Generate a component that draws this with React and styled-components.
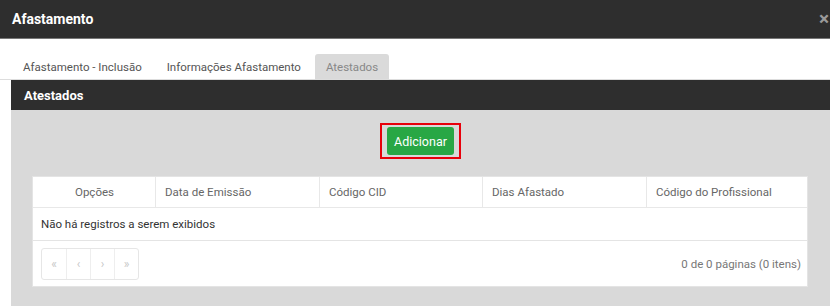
import React from 'react'
import styled, { createGlobalStyle } from 'styled-components'

const Global = createGlobalStyle`
  * { box-sizing: border-box; }
  body {
    margin: 0;
    background: #fff;
    font-family: Roboto, "Liberation Sans", Arial, sans-serif;
    overflow: hidden;
  }
`

const Modal = styled.div`
  width: 830px;
  height: 306px;
  background: #fff;
  display: flex;
  flex-direction: column;
`

const Header = styled.div`
  height: 39px;
  flex: none;
  display: flex;
  align-items: center;
  justify-content: space-between;
  padding: 0 0 1px 12px;
  background: #2e2e2e;
  border-bottom: 1px solid #777;
`

const Title = styled.h4`
  margin: 0;
  font-size: 14px;
  font-weight: 700;
  color: #fff;
`

const Close = styled.span`
  width: 12px;
  margin-right: -1px;
  font-size: 19px;
  font-weight: 700;
  line-height: 1;
  color: #9a9a9a;
`

const Tabs = styled.div`
  display: flex;
  gap: 3px;
  padding: 15px 0 0 12px;
  border-bottom: 1px solid #ddd;
`

const Tab = styled.div`
  height: 25px;
  padding: 0 11px;
  display: flex;
  align-items: center;
  font-size: 11.5px;
  color: ${p => (p.active ? '#888' : '#555')};
  background: ${p => (p.active ? '#dadada' : 'transparent')};
  border-radius: 3px 3px 0 0;
`

const Panel = styled.div`
  flex: 1;
  margin-left: 11px;
  display: flex;
  flex-direction: column;
  background: #d9d9d9;
`

const PanelHead = styled.div`
  height: 30px;
  flex: none;
  display: flex;
  align-items: center;
  padding-left: 13px;
  background: #2e2e2e;
  color: #fff;
  font-size: 13px;
  font-weight: 700;
`

const Body = styled.div`
  padding: 13px 22px 0 21px;
  display: flex;
  flex-direction: column;
`

const Actions = styled.div`
  display: flex;
  justify-content: center;
  margin-bottom: 17px;
`

const Highlight = styled.div`
  margin-left: 1px;
  padding: 2px 5px;
  border: 2px solid #e8000b;
`

const AddButton = styled.button`
  display: block;
  height: 28px;
  width: 67px;
  padding: 0;
  border: none;
  border-radius: 3px;
  background: #28a745;
  color: #fff;
  font-family: inherit;
  font-size: 12.5px;
`

const Grid = styled.div`
  background: #fff;
  border: 1px solid #e4e4e4;
  border-bottom: none;
`

const HeadRow = styled.div`
  display: grid;
  grid-template-columns: 122px 164px 163px 164px 1fr;
  height: 31px;
  border-bottom: 1px solid #e8e8e8;
`

const HeadCell = styled.div`
  display: flex;
  align-items: center;
  justify-content: ${p => (p.center ? 'center' : 'flex-start')};
  padding: 0 9px;
  font-size: 11.5px;
  font-weight: 400;
  color: #666;
  border-left: ${p => (p.first ? 'none' : '1px solid #e8e8e8')};
  padding-left: ${p => (p.first ? '10px' : '9px')};
`

const EmptyRow = styled.div`
  height: 33px;
  display: flex;
  align-items: center;
  padding-left: 8px;
  font-size: 11.5px;
  color: #333;
  border-bottom: 1px solid #e4e4e4;
`

const PagerRow = styled.div`
  height: 46px;
  display: flex;
  align-items: center;
  justify-content: space-between;
  padding: 0 6px 0 8px;
  border-bottom: 1px solid #e4e4e4;
`

const Pager = styled.div`
  display: flex;
  height: 32px;
  border: 1px solid #e6e6e6;
  border-radius: 3px;
`

const PageBtn = styled.span`
  width: 24px;
  display: flex;
  align-items: center;
  justify-content: center;
  font-size: 12px;
  color: #c8c8c8;
  border-left: ${p => (p.first ? 'none' : '1px solid #eee')};
`

const Info = styled.span`
  font-size: 11.5px;
  color: #777;
`

const columns = ['Data de Emissão', 'Código CID', 'Dias Afastado', 'Código do Profissional']

export default function App() {
  return (
    <>
      <Global />
      <Modal>
        <Header>
          <Title>Afastamento</Title>
          <Close>×</Close>
        </Header>
        <Tabs>
          <Tab>Afastamento - Inclusão</Tab>
          <Tab>Informações Afastamento</Tab>
          <Tab active>Atestados</Tab>
        </Tabs>
        <Panel>
          <PanelHead>Atestados</PanelHead>
          <Body>
            <Actions>
              <Highlight>
                <AddButton>Adicionar</AddButton>
              </Highlight>
            </Actions>
            <Grid>
              <HeadRow>
                <HeadCell first center>Opções</HeadCell>
                {columns.map(c => (
                  <HeadCell key={c}>{c}</HeadCell>
                ))}
              </HeadRow>
              <EmptyRow>Não há registros a serem exibidos</EmptyRow>
              <PagerRow>
                <Pager>
                  <PageBtn first>«</PageBtn>
                  <PageBtn>‹</PageBtn>
                  <PageBtn>›</PageBtn>
                  <PageBtn>»</PageBtn>
                </Pager>
                <Info>0 de 0 páginas (0 itens)</Info>
              </PagerRow>
            </Grid>
          </Body>
        </Panel>
      </Modal>
    </>
  )
}
